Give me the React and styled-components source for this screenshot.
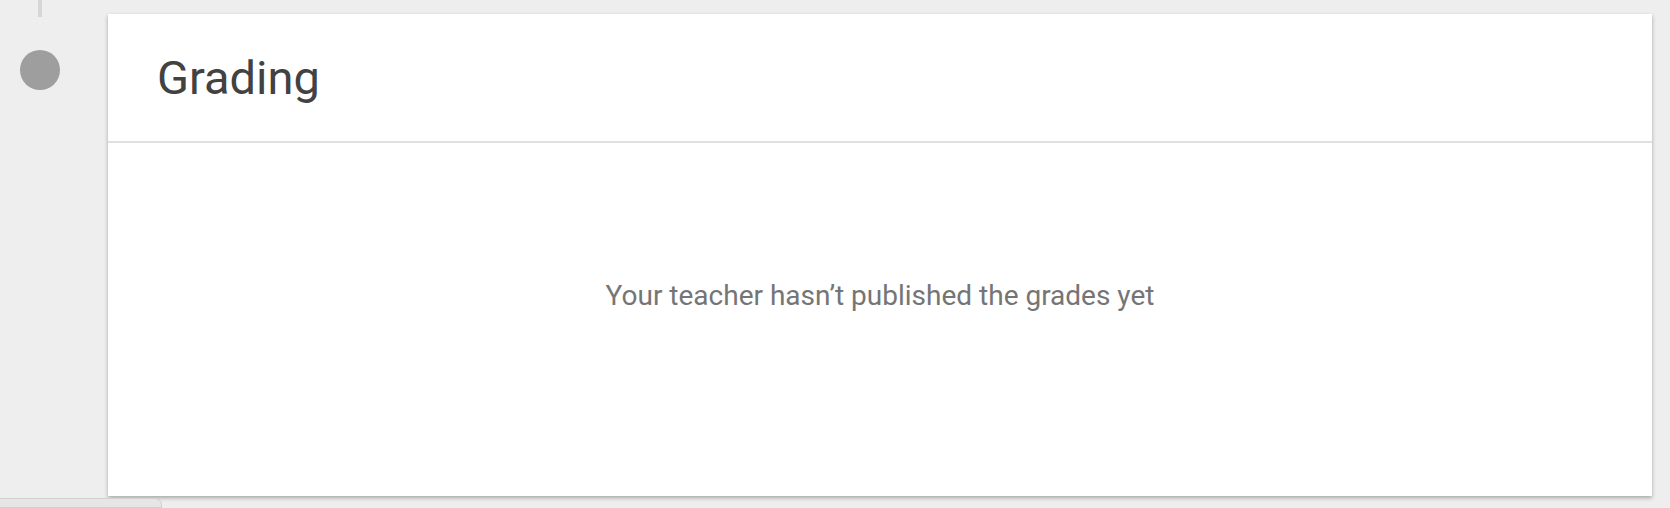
import styled, { createGlobalStyle } from "styled-components";

const GlobalStyle = createGlobalStyle`
  html, body {
    margin: 0;
    padding: 0;
    background: #eeeeee;
    font-family: Roboto, "Liberation Sans", sans-serif;
    overflow: hidden;
  }
`

function App() {
    return (
        <>
            <GlobalStyle/>
            <Page>
                <Row>
                    <Timeline>
                        <TimelineLine/>
                        <TimelineDot/>
                    </Timeline>
                    <Card>
                        <CardHeader>
                            <Title>Grading</Title>
                        </CardHeader>
                        <CardBody>
                            <EmptyText>Your teacher hasn’t published the grades yet</EmptyText>
                        </CardBody>
                    </Card>
                </Row>
                <BottomTab/>
            </Page>
        </>
    )
}

export default App;

const Page = styled.div`
  width: 1670px;
  height: 508px;
  display: flex;
  flex-direction: column;
  overflow: hidden;
`

const Row = styled.div`
  display: flex;
  padding-right: 18px;
`

const Timeline = styled.div`
  width: 108px;
  flex-shrink: 0;
  display: flex;
  flex-direction: column;
  padding-left: 20px;
  box-sizing: border-box;
`

const TimelineLine = styled.div`
  width: 4px;
  height: 17px;
  margin-left: 18px;
  background: #d6d6d6;
`

const TimelineDot = styled.div`
  width: 40px;
  height: 40px;
  margin-top: 33px;
  border-radius: 50%;
  background: #9e9e9e;
`

const Card = styled.div`
  flex: 1;
  margin-top: 14px;
  height: 482px;
  background: #fff;
  box-shadow: 0 2px 4px rgba(0, 0, 0, 0.3);
  display: flex;
  flex-direction: column;
`

const CardHeader = styled.div`
  height: 127px;
  border-bottom: 2px solid #e0e0e0;
  display: flex;
  align-items: center;
  padding-left: 49px;
`

const Title = styled.h1`
  margin: 0;
  font-size: 47px;
  font-weight: 400;
  color: #424242;
  line-height: 1;
`

const CardBody = styled.div`
  flex: 1;
  display: flex;
  align-items: center;
  justify-content: center;
  padding-bottom: 48px;
`

const EmptyText = styled.p`
  margin: 0;
  font-size: 28px;
  color: #757575;
`

const BottomTab = styled.div`
  margin-top: 2px;
  width: 161px;
  height: 20px;
  background: #e6e6e6;
  border: 1px solid #d0d0d0;
  border-left: none;
  border-top-right-radius: 7px;
`
